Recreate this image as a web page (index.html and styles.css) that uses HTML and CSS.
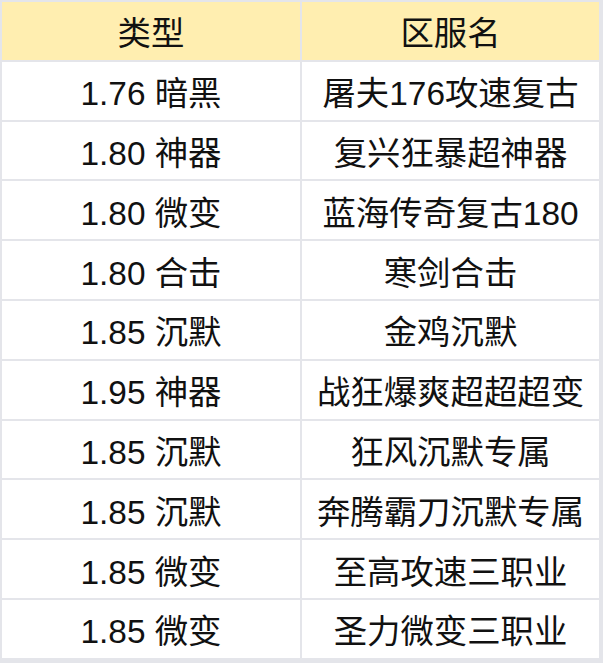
FILE: index.html
```html
<!DOCTYPE html>
<html lang="zh">
<head>
<meta charset="utf-8">
<link rel="stylesheet" href="styles.css">
</head>
<body>
<div class="table">
  <div class="cell head">类型</div><div class="cell head">区服名</div>
  <div class="cell">1.76 暗黑</div><div class="cell">屠夫176攻速复古</div>
  <div class="cell">1.80 神器</div><div class="cell">复兴狂暴超神器</div>
  <div class="cell">1.80 微变</div><div class="cell">蓝海传奇复古180</div>
  <div class="cell">1.80 合击</div><div class="cell">寒剑合击</div>
  <div class="cell">1.85 沉默</div><div class="cell">金鸡沉默</div>
  <div class="cell">1.95 神器</div><div class="cell">战狂爆爽超超超变</div>
  <div class="cell">1.85 沉默</div><div class="cell">狂风沉默专属</div>
  <div class="cell">1.85 沉默</div><div class="cell">奔腾霸刀沉默专属</div>
  <div class="cell">1.85 微变</div><div class="cell">至高攻速三职业</div>
  <div class="cell">1.85 微变</div><div class="cell">圣力微变三职业</div>
</div>
</body>
</html>
```
FILE: styles.css
```css
html, body {
  margin: 0;
  padding: 0;
  background: #e4e5ea;
}
.table {
  display: grid;
  grid-template-columns: 298px 297px;
  grid-auto-rows: 57.8px;
  gap: 2px;
  padding: 2px;
  width: max-content;
  background: #e4e5ea;
  font-family: "Liberation Sans", "Noto Sans CJK SC", sans-serif;
  font-size: 33.4px;
  color: #111;
}
.cell {
  background: #fff;
  display: flex;
  align-items: center;
  justify-content: center;
  white-space: nowrap;
}
.cell.head {
  background: #ffeeb0;
}
```
